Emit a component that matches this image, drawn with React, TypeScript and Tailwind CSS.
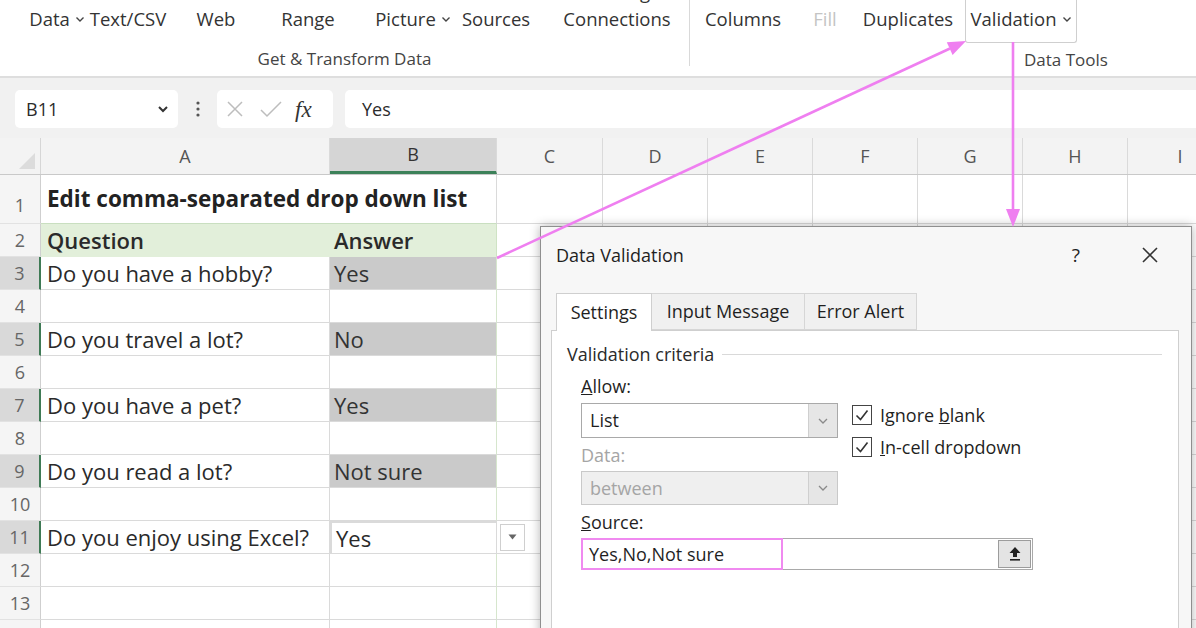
import React from "react";

const Chev = ({ c = "#444" }: { c?: string }) => (
  <svg width="10" height="7" viewBox="0 0 10 7" className="inline-block ml-[5px] shrink-0">
    <path d="M1.5 1.5 L5 5 L8.5 1.5" fill="none" stroke={c} strokeWidth="1.4" />
  </svg>
);

type Btn = { l1: string; l2: string; w: string; chev?: boolean; dim?: boolean };

const g1: Btn[] = [
  { l1: "Get", l2: "Data", w: "w-[10px]", chev: true },
  { l1: "From", l2: "Text/CSV", w: "w-[132px]" },
  { l1: "From", l2: "Web", w: "w-[44px]" },
  { l1: "From Table/", l2: "Range", w: "w-[140px]" },
  { l1: "From", l2: "Picture", w: "w-[70px]", chev: true },
  { l1: "Recent", l2: "Sources", w: "w-[96px]" },
  { l1: "Existing", l2: "Connections", w: "w-[146px]" },
];
const g2: Btn[] = [
  { l1: "Text to", l2: "Columns", w: "w-[106px]" },
  { l1: "Flash", l2: "Fill", w: "w-[58px]", dim: true },
  { l1: "Remove", l2: "Duplicates", w: "w-[108px]" },
];

const RibbonBtn = ({ b }: { b: Btn }) => (
  <div className={`${b.w} shrink-0 flex flex-col items-center`}>
    <div className={`h-[22px] leading-[22px] mt-[-5px] mb-[5px] whitespace-nowrap flex justify-center w-full ${b.dim ? "text-[#c4c4c4]" : ""}`}>{b.l1}</div>
    <div className={`h-[22px] leading-[22px] whitespace-nowrap flex justify-center items-center w-full ${b.dim ? "text-[#c4c4c4]" : ""}`}>
      <span className="shrink-0">{b.l2}</span>
      {b.chev && <Chev />}
    </div>
  </div>
);

type Col = { l: string; w: string };
const cols: Col[] = [
  { l: "A", w: "w-[289px]" },
  { l: "B", w: "w-[167px]" },
  { l: "C", w: "w-[106px]" },
  { l: "D", w: "w-[105px]" },
  { l: "E", w: "w-[105px]" },
  { l: "F", w: "w-[105px]" },
  { l: "G", w: "w-[105px]" },
  { l: "H", w: "w-[105px]" },
  { l: "I", w: "w-[105px]" },
];

type Row = { n: number; a?: string; b?: string; kind?: "title" | "head" | "gray" | "active"; sel?: boolean };
const rows: Row[] = [
  { n: 1, a: "Edit comma-separated drop down list", kind: "title" },
  { n: 2, a: "Question", b: "Answer", kind: "head" },
  { n: 3, a: "Do you have a hobby?", b: "Yes", kind: "gray", sel: true },
  { n: 4 },
  { n: 5, a: "Do you travel a lot?", b: "No", kind: "gray", sel: true },
  { n: 6 },
  { n: 7, a: "Do you have a pet?", b: "Yes", kind: "gray", sel: true },
  { n: 8 },
  { n: 9, a: "Do you read a lot?", b: "Not sure", kind: "gray", sel: true },
  { n: 10 },
  { n: 11, a: "Do you enjoy using Excel?", b: "Yes", kind: "active", sel: true },
  { n: 12 },
  { n: 13 },
  { n: 14 },
];

const GridRow = ({ r }: { r: Row }) => {
  const title = r.kind === "title";
  const h = title ? "h-[49px]" : "h-[33px]";
  const head = r.kind === "head";
  return (
    <div className={`flex ${h}`}>
      <div
        className={`w-[41px] shrink-0 flex justify-center text-[18px] text-[#666] border-b border-[#e2e2e2] ${
          title ? "items-end pb-[4px]" : "items-center"
        } ${r.sel ? "bg-[#d9d9d9] border-r-2 border-r-[#3f7a55]" : "bg-[#f5f5f5] border-r border-r-[#cfcfcf]"}`}
      >
        {r.n}
      </div>
      {/* A */}
      <div
        className={`w-[289px] shrink-0 flex pl-[6px] whitespace-nowrap border-b ${
          title ? "items-end pb-[7px] border-b-[#c9dfc0] font-bold text-[22.5px] text-[#222] relative z-10" : "items-center border-r border-[#dadada] text-[22px] text-[#2a2a2a]"
        } ${head ? "bg-[#e2efda] border-r-[#e2efda] font-semibold border-b-[#e2efda]" : ""}`}
      >
        {r.a}
      </div>
      {/* B */}
      <div
        className={`w-[167px] shrink-0 flex items-center pl-[4px] text-[22px] whitespace-nowrap border-b border-r ${
          title ? "border-b-[#c9dfc0] border-r-[#dadada]" : "border-[#dadada]"
        } ${head ? "bg-[#e2efda] font-semibold border-b-[#e2efda] border-r-[#cfe3c4] text-[#2a2a2a]" : ""} ${
          r.kind === "gray" ? "bg-[#cacaca] text-[#333] border-r-[#d6e6cd]" : ""
        } ${r.kind === "active" ? "border-2 border-[#86a28f] text-[#2a2a2a]" : ""} ${!r.kind || r.kind === "title" ? "border-r-[#d6e6cd]" : ""}`}
      >
        {r.b}
      </div>
      {cols.slice(2).map((c) => (
        <div key={c.l} className={`${c.w} shrink-0 border-b border-r border-[#dadada] flex items-center pl-[3px]`}>
          {r.kind === "active" && c.l === "C" && (
            <div className="w-[25px] h-[27px] bg-white border border-[#cfcfcf] flex items-center justify-center">
              <svg width="9" height="6" viewBox="0 0 9 6">
                <path d="M0.5 0.5 H8.5 L4.5 5.5 Z" fill="#666" />
              </svg>
            </div>
          )}
        </div>
      ))}
    </div>
  );
};

const Check = () => (
  <div className="w-[20px] h-[20px] border-[1.5px] border-[#444] bg-white flex items-center justify-center shrink-0">
    <svg width="16" height="14" viewBox="0 0 16 14">
      <path d="M2.5 7.5 L6.5 11.5 L13.5 2.5" fill="none" stroke="#333" strokeWidth="1.6" />
    </svg>
  </div>
);

const ComboBtn = () => (
  <div className="ml-auto w-[29px] h-full bg-[#e6e6e6] border-l border-[#cfcfcf] flex items-center justify-center">
    <svg width="12" height="8" viewBox="0 0 12 8">
      <path d="M2 2 L6 6 L10 2" fill="none" stroke="#8a8a8a" strokeWidth="1.3" />
    </svg>
  </div>
);

export default function App() {
  return (
    <div className="relative w-[1196px] h-[628px] overflow-hidden bg-white font-['Open_Sans',sans-serif] text-[#2b2b2b]">
      {/* Ribbon */}
      <div className="h-[78px] border-b-2 border-[#dedede] flex overflow-hidden text-[18.5px] text-[#333]">
        <div className="w-[690px] shrink-0 h-[66px] border-r border-[#d9d9d9] flex flex-col">
          <div className="flex mt-[-14px] pl-[52px]">
            {g1.map((b) => (
              <RibbonBtn key={b.l2} b={b} />
            ))}
          </div>
          <div className="mt-[19px] h-[20px] leading-[20px] text-center text-[17px] text-[#444] whitespace-nowrap">Get &amp; Transform Data</div>
        </div>
        <div className="w-[752px] shrink-0 flex flex-col">
          <div className="flex mt-[-14px]">
            {g2.map((b) => (
              <RibbonBtn key={b.l2} b={b} />
            ))}
            <div className="ml-[3px] w-[112px] shrink-0 flex flex-col items-center border border-t-0 border-[#cfcfcf] rounded-b-[3px] pb-[12px]">
              <div className="h-[22px] leading-[22px] mt-[-5px] mb-[5px]">Data</div>
              <div className="h-[22px] leading-[22px] flex items-center whitespace-nowrap">
                Validation
                <Chev />
              </div>
            </div>
          </div>
          <div className="mt-[7px] h-[20px] leading-[20px] text-center text-[17px] text-[#444]">Data Tools</div>
        </div>
      </div>

      {/* Formula bar */}
      <div className="h-[60px] bg-[#f1f1f1] pt-[12px] flex items-start text-[18px] text-[#2b2b2b]">
        <div className="ml-[15px] w-[163px] h-[38px] bg-white rounded-[5px] flex items-center pl-[11px] pr-[9px]">
          <span>B11</span>
          <svg width="12" height="8" viewBox="0 0 12 8" className="ml-auto">
            <path d="M2 2 L6 6 L10 2" fill="none" stroke="#333" strokeWidth="2" />
          </svg>
        </div>
        <div className="w-[39px] h-[38px] flex items-center justify-center">
          <svg width="4" height="16" viewBox="0 0 4 16">
            <circle cx="2" cy="2" r="1.6" fill="#555" />
            <circle cx="2" cy="8" r="1.6" fill="#555" />
            <circle cx="2" cy="14" r="1.6" fill="#555" />
          </svg>
        </div>
        <div className="w-[116px] h-[38px] bg-white rounded-[5px] flex items-center pl-[8px]">
          <svg width="20" height="20" viewBox="0 0 20 20">
            <path d="M3 3 L17 17 M17 3 L3 17" stroke="#bdbdbd" strokeWidth="1.5" />
          </svg>
          <svg width="24" height="20" viewBox="0 0 24 20" className="ml-[14px]">
            <path d="M2 11 L8 17 L22 3" fill="none" stroke="#bdbdbd" strokeWidth="1.5" />
          </svg>
          <span className="ml-[12px] italic font-['Liberation_Serif',serif] text-[23px] text-[#333] leading-none">fx</span>
        </div>
        <div className="ml-[12px] flex-1 h-[38px] bg-white rounded-l-[5px] flex items-center pl-[17px]">Yes</div>
      </div>

      {/* Grid */}
      <div className="flex h-[37px] bg-[#f3f3f3] border-b border-[#c9c9c9] text-[18px] text-[#555]">
        <div className="w-[41px] shrink-0 flex items-end justify-end pr-[4px] pb-[4px] border-r border-[#d6d6d6]">
          <svg width="18" height="18" viewBox="0 0 18 18">
            <path d="M17 1 L17 17 L1 17 Z" fill="#dcdcdc" />
          </svg>
        </div>
        {cols.map((c) => (
          <div
            key={c.l}
            className={`${c.w} shrink-0 flex items-center justify-center border-r border-[#dadada] ${
              c.l === "B" ? "bg-[#d5d5d5] border-b-[3px] border-b-[#3c8159] text-[#333]" : ""
            }`}
          >
            {c.l}
          </div>
        ))}
      </div>
      <div>
        {rows.map((r) => (
          <GridRow key={r.n} r={r} />
        ))}
      </div>

      {/* Dialog */}
      <div className="absolute left-[540px] top-[226px] w-[652px] h-[420px] bg-[#f7f7f7] border border-[#8f8f8f] shadow-[0_0_10px_rgba(0,0,0,0.3)] text-[18px] text-[#1f1f1f] z-10">
        <div className="h-[56px] flex items-center pl-[15px]">
          <span>Data Validation</span>
          <span className="ml-auto mr-[61px] text-[19px]">?</span>
          <svg width="18" height="18" viewBox="0 0 18 18" className="mr-[32px]">
            <path d="M2 2 L16 16 M16 2 L2 16" stroke="#333" strokeWidth="1.6" />
          </svg>
        </div>
        <div className="flex pl-[15px] mt-[10px] h-[37px] relative z-10">
          <div className="w-[96px] h-[38px] bg-white border border-b-0 border-[#cfcfcf] flex items-center justify-center">Settings</div>
          <div className="w-[153px] h-[37px] bg-[#f0f0f0] border border-l-0 border-[#d6d6d6] flex items-center justify-center">Input Message</div>
          <div className="w-[112px] h-[37px] bg-[#f0f0f0] border border-l-0 border-[#d6d6d6] flex items-center justify-center">Error Alert</div>
        </div>
        <div className="ml-[10px] w-[628px] h-[320px] bg-white border border-[#cfcfcf] pt-[13px] pl-[15px]">
          <div className="flex items-center h-[20px] leading-[20px]">
            <span className="text-[#2b2b2b]">Validation criteria</span>
            <div className="flex-1 h-px bg-[#d9d9d9] ml-[8px] mr-[16px]" />
          </div>
          <div className="ml-[14px]">
            <div className="flex">
              <div className="w-[257px] shrink-0">
                <div className="mt-[12px] h-[20px] leading-[20px]">
                  <span className="underline">A</span>llow:
                </div>
                <div className="mt-[7px] h-[35px] border border-[#a9a9a9] bg-white flex items-center pl-[8px]">
                  <span>List</span>
                  <ComboBtn />
                </div>
                <div className="mt-[7px] h-[20px] leading-[20px] text-[#a5a5a5]">Data:</div>
                <div className="mt-[6px] h-[34px] border border-[#c9c9c9] bg-[#efefef] flex items-center pl-[8px] text-[#a5a5a5]">
                  <span>between</span>
                  <ComboBtn />
                </div>
              </div>
              <div className="ml-[14px] mt-[41px] flex flex-col gap-[12px]">
                <div className="flex items-center h-[20px]">
                  <Check />
                  <span className="ml-[8px]">
                    Ignore <span className="underline">b</span>lank
                  </span>
                </div>
                <div className="flex items-center h-[20px]">
                  <Check />
                  <span className="ml-[8px]">
                    <span className="underline">I</span>n-cell dropdown
                  </span>
                </div>
              </div>
            </div>
            <div className="mt-[7px] h-[20px] leading-[20px]">
              <span className="underline">S</span>ource:
            </div>
            <div className="mt-[6px] w-[452px] h-[32px] border border-[#a9a9a9] bg-white flex items-center">
              <div className="w-[202px] h-[32px] -ml-px border-2 border-[#f08af0] flex items-center pl-[6px] whitespace-nowrap">Yes,No,Not sure</div>
              <div className="ml-auto mr-[1px] w-[33px] h-[28px] bg-[#e4e4e4] border border-[#9c9c9c] flex items-center justify-center">
                <svg width="14" height="16" viewBox="0 0 14 16">
                  <path d="M7 1 L12.5 7 H9 V11 H5 V7 H1.5 Z" fill="#222" />
                  <rect x="2" y="13" width="10" height="1.6" fill="#222" />
                </svg>
              </div>
            </div>
          </div>
        </div>
      </div>

      {/* Annotation arrows */}
      <svg className="absolute inset-0 z-20 pointer-events-none" width="1196" height="628" viewBox="0 0 1196 628">
        <line x1="497" y1="258" x2="950" y2="48.5" stroke="#ef7ff0" strokeWidth="2.6" />
        <polygon points="966,41 952.6,55 946.8,42.2" fill="#ef7ff0" />
        <line x1="1013" y1="42" x2="1013" y2="212" stroke="#ef7ff0" strokeWidth="2.6" />
        <polygon points="1013,227 1006,209 1020,209" fill="#ef7ff0" />
      </svg>
    </div>
  );
}
